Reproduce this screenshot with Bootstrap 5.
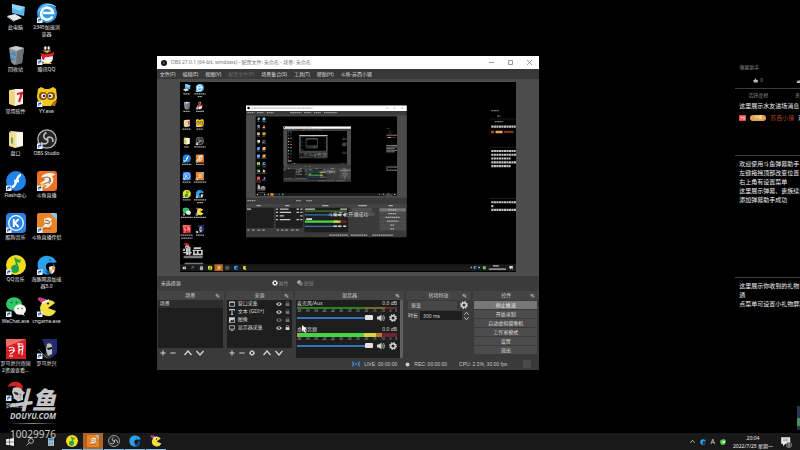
<!DOCTYPE html>
<html lang="zh-CN">
<head>
<meta charset="utf-8">
<meta name="viewport" content="width=device-width, initial-scale=1">
<title>OBS Studio</title>
<link href="https://cdn.jsdelivr.net/npm/bootstrap@5.3.0/dist/css/bootstrap.min.css" rel="stylesheet">
<style>
:root{--ink:#d6d6d6;--panel:#3a3a3a;--dark:#1e1e1e}
body{background:#000;color:var(--ink);font:5px/7px "Noto Sans","Noto Sans CJK SC",sans-serif;height:100vh;overflow:hidden}
button,input,select{font:inherit;color:inherit;background:none;border:0;padding:0;margin:0;min-width:0}
svg{display:block;flex:none}
.sprite{position:absolute;width:0;height:0}
.icons{display:grid;grid-template-columns:31px 31px;grid-auto-rows:42px;padding-top:3px}
.shortcut{display:flex;flex-direction:column;align-items:center;justify-content:flex-start;gap:1px;white-space:nowrap;color:#e6e6e6}
.shortcut svg{width:20px;height:20px}
.i5{width:5px;height:5px}.i6{width:6px;height:6px}.i8{width:8px;height:8px}.i12{width:12px;height:12px}
/* watermark over the desktop */
.brand{position:absolute;left:8px;bottom:10px;width:50px;color:#c9c9c9;text-align:center;pointer-events:none}
.brand-name{font:italic 900 24px/24px "Noto Sans CJK SC",sans-serif;color:#c4c4c4;white-space:nowrap;margin-left:-2px}
.brand-site{font:italic 700 8px/9px "Noto Sans","Liberation Sans",sans-serif;white-space:nowrap}
.brand-rule{height:1px;background:linear-gradient(90deg,transparent,#888,transparent);margin:3px 0 4px}
.brand-id{font:10px/12px "Noto Sans",sans-serif}
/* recorder window */
.win{position:absolute;left:19.6%;top:13%;width:47.8%;background:var(--panel)}
.win-title{background:#fff;color:#777;height:13px}
.win-title button{width:19px;height:13px;display:grid;place-items:center}
.win-menu{height:10px;background:#383838;gap:7px;padding-left:3px}
.win-menu a{color:#dedede;text-decoration:none}
.win-menu a.off{color:#696969}
.stage{background:#4c4c4c;padding:3px 6% 4px}
.stage svg{width:100%;height:auto;background:#000}
.source-bar{height:15px;background:#3b3b3b}
.source-bar button{display:flex;align-items:center;gap:1px;color:#858585}
.source-name{width:30%}
.docks{display:grid;grid-template-columns:minmax(0,67fr) minmax(0,67fr) minmax(0,109fr) minmax(0,65fr) minmax(0,66fr);column-gap:2px}
.dock-head{height:9px;background:#444;display:flex;align-items:center;justify-content:center;position:relative;color:#cfcfcf}
.dock-head svg{position:absolute;right:4px}
.dock-list{background:var(--dark);height:48px;margin:0 1px;list-style:none;padding:0}
.dock-list li{height:8px;display:flex;align-items:center;gap:3px;padding:0 2px;white-space:nowrap}
.dock-list li.on{background:#2c2c2c}
.dock-tools{height:11px;display:flex;align-items:center;gap:4px;padding-left:3px}
.mixer{background:var(--dark);height:58px;margin:0 1px;border-right:3px solid #606060;padding:0 3px 0 1px}
.channel{height:26px}
.meter{height:2px;background:linear-gradient(90deg,#2f7f22 0 68%,#6f6d25 68% 88%,#6f2a2a 88%)}
.meter.loud{height:4px;background:linear-gradient(90deg,#c8993a 0 2%,#46d446 2% 67%,#d8d440 67% 79%,#c07a2c 79% 85%,#702432 85%)}
.scale{display:flex;justify-content:space-between;font-size:3px;line-height:4px;color:#b5b5b5;height:5px}
.vol{appearance:none;flex:1;height:5px;background:linear-gradient(#3673ba,#3673ba) center/100% 2px no-repeat}
.vol::-webkit-slider-thumb{appearance:none;width:8px;height:5px;background:#e2e2e2;border:0;border-radius:1px}
.field{background:var(--dark);height:9px;width:100%;padding-left:3px}
select.field{background:#474747;appearance:none}
.line1{height:11px;padding:0 3px 0 2px;gap:3px}
.line2{gap:2px;padding:0 2px}
.ctl{background:#4c4c4c;height:8px;line-height:8px;color:#dcdcdc}
.ctl.active-out{background:#777;color:#f2f2f2}
.controls{gap:1px;padding:1px 2px 0 1px}
.status{height:11px;font-family:"Liberation Sans",sans-serif;color:#c8c8c8;white-space:nowrap}
.pointer{position:absolute;left:37.8%;top:75%;width:5px;height:8px}
/* chat helper, runs off the right edge */
.chat{position:absolute;left:91.9%;right:0;top:14.5%;overflow:hidden;white-space:nowrap;font-size:6px;line-height:9px;color:#f0f0f0}
.chat section{border-top:1px solid #3c3c3c;padding-left:4px}
.chat .dim{color:#8a8a8a;font-size:5px}
.s-head{height:25px;padding-left:4px}
.likes{padding:4px 0 0 14px;gap:2px}
.tabs-row{padding:2px 0 2px 9px}
.entry{gap:4px;padding-top:3px}
.entry>*{flex:none}
.who{color:#a8401f}
.s-enter{height:67px}.s-msg{height:122px;padding-top:4px}.s-gift{padding-top:4px}
.hi{background:#e2483f;color:#fff;font-size:5px;line-height:6px;padding:0 1px}
.tag{background:#dfa451;color:#fff3d0;font-size:4px;line-height:6px;border-radius:3px;width:16px;text-align:center}
.sidebit{position:absolute;right:0;bottom:3px;width:3px;height:24px;background:linear-gradient(#26364f 0 50%,#4c8a60 50% 85%,#26364f 85%)}
/* taskbar */
.taskbar{height:17px;background:#191919}
.task{width:20px;height:17px;display:grid;place-items:center;margin-right:1px}
.task:first-child{margin-right:0}
.task.run{border-bottom:1px solid #76b9ed}
.task.front{background:#b06526}
.tray{gap:5px;padding-right:8px}
.lang{font-size:7px}
.clock{line-height:8px;text-align:center;width:44px;color:#eee}
</style>
<script src="https://cdn.jsdelivr.net/npm/bootstrap@5.3.0/dist/js/bootstrap.bundle.min.js"></script>
</head>
<body class="d-flex flex-column">
<svg class="sprite" aria-hidden="true">
<defs>
<symbol id="lnk" viewBox="0 0 20 20"><rect y="14.500" width="5.500" height="5.500" fill="#eef3fa"/><path d="M1.200 18.800V17q0-1.200 1.200-1.200h.8v-1l1.500 1.600-1.500 1.500v-1h-.8v1.900z" fill="#2458b0"/></symbol>
<symbol id="pc" viewBox="0 0 20 20"><path d="M6 1l13 3-1 9-12-3z" fill="#59b6ec"/><path d="M6 1l13 3-5 4-8-3z" fill="#8fd3f7"/><path d="M1 13l8-2 7 4-8 3z" fill="#e5e9ec"/><path d="M1 13l7 5v1l-7-5z" fill="#aab2b9"/></symbol>
<symbol id="bin" viewBox="0 0 20 20"><path d="M3 3l7-2 8 2-2 15-8 2-3-3z" fill="#8d9194"/><path d="M3 3l7-2 8 2-7 3z" fill="#c7cbce"/><path d="M11 6l7-3-2 15-6 2z" fill="#6e7275"/><path d="M5 9l3-1 1 3m0 3l-3 1-1-3" fill="none" stroke="#2d8de0" stroke-width="1.700"/></symbol>
<symbol id="fold1" viewBox="0 0 20 20"><path d="M4 3l6-1v17l-6-2z" fill="#f6e3a1"/><path d="M9 2h8v15l-8 2z" fill="#f4f0e6"/><path d="M3 3l6 2v14l-6-2z" fill="#f0d581"/><path d="M11 7l5-1-3 9" fill="none" stroke="#d2232b" stroke-width="2.200"/></symbol>
<symbol id="fold2" viewBox="0 0 20 20"><path d="M4 2l12 1 1 14-8 2z" fill="#eae7c3"/><path d="M10 4l7-1v13l-6 2z" fill="#fbf8e4"/><path d="M3 3l6 3v13l-6-2z" fill="#f3dc84"/><path d="M5 8l2 1v6l-2-1z" fill="#6da56c"/></symbol>
<symbol id="flash" viewBox="0 0 20 20"><circle cx="10" cy="10" r="10" fill="#2083ea"/><path d="M15 4c-5 0-4 12-9 12M8 10h5" fill="none" stroke="#fff" stroke-width="2.400"/><use href="#lnk"/></symbol>
<symbol id="kugou" viewBox="0 0 20 20"><rect width="20" height="20" rx="4" fill="#2a83e8"/><circle cx="10" cy="10" r="7.300" fill="none" stroke="#fff" stroke-width="1.300"/><path d="M7.800 6v8M12.700 6l-4 4 4 4" fill="none" stroke="#fff" stroke-width="2"/><use href="#lnk"/></symbol>
<symbol id="qqm0" viewBox="0 0 20 20"><circle cx="10" cy="10" r="10" fill="#f6dc1c"/><path d="M8 2l5 3 2-1-1 4-3-1 2 6a3.600 3.600 0 1 1-3-3.500z" fill="#22a34a"/><circle cx="9" cy="14" r="4" fill="#22a34a"/></symbol>
<symbol id="qqm" viewBox="0 0 20 20"><use href="#qqm0"/><use href="#lnk"/></symbol>
<symbol id="wechat" viewBox="0 0 20 20"><ellipse cx="8" cy="7" rx="8" ry="6.800" fill="#32c566"/><ellipse cx="14" cy="12.500" rx="6" ry="5.200" fill="#f1f3f1"/><path d="M17 16l2 3-4-2z" fill="#f1f3f1"/><g fill="#24623b"><circle cx="5.500" cy="5.500" r="1"/><circle cx="10.500" cy="5.500" r="1"/><circle cx="12" cy="11.500" r=".7"/><circle cx="16" cy="11.500" r=".7"/></g><use href="#lnk"/></symbol>
<symbol id="rome" viewBox="0 0 20 20"><rect width="20" height="20" fill="#d51f24"/><path d="M0 0h20L0 8z" fill="#ef6a63"/><path d="M3 9q4-2 5 1t-4 5M3 12q3-2 6 0M11 5h6M12 8l5-1-1 9M12 12l4-2M13 4v11M3 17h4" fill="none" stroke="#fff" stroke-width="1.100"/></symbol>
<symbol id="spart" viewBox="0 0 20 20"><path d="M2 5c3-6 14-6 15 2l-2 2C12 5 7 4 2 6z" fill="#d32222"/><path d="M7 7c4-2 9 0 10 4v8l-4 1-5-3-2-6z" fill="#c9c5c4"/><path d="M8 11l4 1v2l-3-1zM14 12l3 0-1 2h-2zM11 16l4 1" fill="#2b2b2b" stroke="#2b2b2b" stroke-width=".6"/><use href="#lnk"/></symbol>
<symbol id="ie" viewBox="0 0 20 20"><circle cx="10" cy="10" r="10" fill="#2d9be8"/><path d="M15.300 13.500A6 6 0 1 1 16 10H6" fill="none" stroke="#fff" stroke-width="2.600"/><path d="M1 9C4 2 14-1 19 4" fill="none" stroke="#a8dcfa" stroke-width="1"/><use href="#lnk"/></symbol>
<symbol id="qq" viewBox="0 0 20 20"><ellipse cx="10" cy="13" rx="6" ry="5.500" fill="#f4f4f4"/><path d="M5 12q0-4 2-5h6q3 1 2 5l-1-2H6z" fill="#222"/><ellipse cx="10" cy="5" rx="4" ry="4" fill="#24201c"/><ellipse cx="8.300" cy="3" rx="1.100" ry="1.700" fill="#fff"/><ellipse cx="11.700" cy="3" rx="1.100" ry="1.700" fill="#fff"/><path d="M6 5.500h8L10 8z" fill="#e9b13a"/><path d="M3 8q7 3 14-1v3q-6 3-9 2l-1 3-2-1v-3z" fill="#df1d28"/><path d="M6 18h8l1 1H5z" fill="#e9b13a"/><use href="#lnk"/></symbol>
<symbol id="yy" viewBox="0 0 20 20"><path d="M1 2l3-2 4 2h4l4-2 3 2 1 8q0 4-3 5l-3 4H6l-3-4Q0 14 0 9z" fill="#f2c81c"/><circle cx="6" cy="9" r="4" fill="#7e4b1d"/><circle cx="14" cy="9" r="4" fill="#7e4b1d"/><circle cx="6.500" cy="9" r="2.400" fill="#f7e7ca"/><circle cx="13.500" cy="9" r="2.400" fill="#f7e7ca"/><circle cx="7" cy="9" r="1.100"/><circle cx="13" cy="9" r="1.100"/><path d="M16 15l4-1-2 5-3 0z" fill="#a4731d"/><use href="#lnk"/></symbol>
<symbol id="obs" viewBox="0 0 20 20"><circle cx="10" cy="10" r="9.200" fill="#252525" stroke="#b9b9b9" stroke-width="1.300"/><path d="M9.500 3.500q-4 2-2 6 2 2 4 1M3.800 13.800q5 2.500 7-1 .6-2.600-1-4M16 13q.3-5-4-5-2.500.8-2 3.300" fill="none" stroke="#bdbdbd" stroke-width="1.600"/></symbol>
<symbol id="obsl" viewBox="0 0 20 20"><use href="#obs"/><use href="#lnk"/></symbol>
<symbol id="fish" viewBox="0 0 20 20"><rect width="20" height="20" rx="3" fill="#ee7021"/><path d="M4 6q3-4 9-4 5 0 5 2l-3 1q2 3 1 6l-4 5-5 2 3-4-5 1-2-3 5-3q-1-3-4-3z" fill="#f8f0e5"/><path d="M6 7q4-2 7 0l-1 4-5 2M13 7q2 3-1 6" fill="none" stroke="#72482d" stroke-width=".8"/><circle cx="6" cy="14" r="2" fill="#eebf33"/><use href="#lnk"/></symbol>
<symbol id="fish20" viewBox="0 0 20 20"><rect width="20" height="20" rx="2" fill="#e88425"/><path d="M13 0h5q2 0 2 2v5z" fill="#8ac9ee"/><path d="M7 6q4-3 8 0l-1 2 1 3-4 4-2-1-4 1 3-4-1-3z" fill="#f7ecdc"/><path d="M8 10l4 1 1-3M5 16q5-2 9 0M8 7l4 1" fill="none" stroke="#7b4d2a" stroke-width=".9"/></symbol>
<symbol id="fish2" viewBox="0 0 20 20"><use href="#fish20"/><use href="#lnk"/></symbol>
<symbol id="dol0" viewBox="0 0 20 20"><path d="M1 13C-1 5 5 0 11 1c5 0 7 4 9 6l-4 1c-6-2-9 3-6 7 2 3 6 2 8 1-5 6-15 4-17-3z" fill="#2aa0ea"/><path d="M17 9q4 5-2 10-5 1-7-3 6 2 8-7z" fill="#174a9c"/><circle cx="13" cy="5" r=".8" fill="#123a66"/></symbol>
<symbol id="dol" viewBox="0 0 20 20"><use href="#dol0"/><path d="M12 12l3-1 3 1q0 5-3 7-3-2-3-7z" fill="#f4f4f4"/><path d="M15 11l3 1v3h-3zM12 15h3v4q-2-1-3-4z" fill="#f0a92a"/><use href="#lnk"/></symbol>
<symbol id="pac0" viewBox="0 0 20 20"><path d="M1 3q-1-4 4-2l4 1 2 2-5 3z" fill="#c2417e"/><path d="M18 6l-7 5 8 3q-3 6-9 5-7-1-7-8 1-7 8-8 5 0 7 3z" fill="#f4df42"/><path d="M5 6l7-3" stroke="#fff" stroke-width="1.500"/><circle cx="11" cy="6.500" r="1"/></symbol>
<symbol id="pac" viewBox="0 0 20 20"><use href="#pac0"/><use href="#lnk"/></symbol>
<symbol id="knight" viewBox="0 0 20 20"><path d="M5 0h15v14l-7 6z" fill="#202a7a"/><path d="M8 4q5-4 8 2v9l-5 5-5-2 3-5z" fill="#32363e"/><path d="M10 5q4-2 5 2v8l-4 2-2-6z" fill="#b8bec4"/><path d="M10 9l5-1v2l-4 1z" fill="#16181c"/><path d="M1 10l9 9" stroke="#60656c"/><use href="#lnk"/></symbol>
<symbol id="gear" viewBox="0 0 16 16"><circle cx="8" cy="8" r="4.600" fill="none" stroke="currentColor" stroke-width="3"/><circle cx="8" cy="8" r="6.700" fill="none" stroke="currentColor" stroke-width="2.400" stroke-dasharray="2.800 2.460"/></symbol>
<symbol id="plus" viewBox="0 0 16 16"><path d="M8 1v14M1 8h14" stroke="currentColor" stroke-width="2.600"/></symbol>
<symbol id="minus" viewBox="0 0 16 16"><path d="M1 8h14" stroke="currentColor" stroke-width="2.600"/></symbol>
<symbol id="up" viewBox="0 0 16 16"><path d="M1 12l7-8 7 8" fill="none" stroke="currentColor" stroke-width="2.600"/></symbol>
<symbol id="down" viewBox="0 0 16 16"><path d="M1 4l7 8 7-8" fill="none" stroke="currentColor" stroke-width="2.600"/></symbol>
<symbol id="pop" viewBox="0 0 16 16"><path d="M2 3h8v8H2zM7 7h7v7H7z" fill="#aaa" stroke="#555"/></symbol>
<symbol id="eye" viewBox="0 0 16 16"><path d="M0 8q8-10 16 0-8 10-16 0z" fill="currentColor"/><circle cx="8" cy="8" r="3.400" fill="#1e1e1e"/><circle cx="8" cy="8" r="1.600" fill="currentColor"/></symbol>
<symbol id="lock" viewBox="0 0 16 16"><path d="M2 7h12v9H2z" fill="currentColor"/><path d="M4.500 8V4.500a3.500 3.500 0 0 1 7 0V8" fill="none" stroke="currentColor" stroke-width="2"/></symbol>
<symbol id="spk" viewBox="0 0 16 16"><path d="M0 5h4l5-4v14l-5-4H0z" fill="currentColor"/><path d="M11 5q2 3 0 6M13 2q4 6 0 12" fill="none" stroke="currentColor" stroke-width="1.500"/></symbol>
<symbol id="winicon" viewBox="0 0 16 16"><path d="M1 2h14v12H1zM1 4h14" fill="none" stroke="currentColor" stroke-width="2"/></symbol>
<symbol id="ticon" viewBox="0 0 16 16"><path d="M1 5V1.500h14V5M8 2v13M5 15h6" fill="none" stroke="currentColor" stroke-width="2.600"/></symbol>
<symbol id="img" viewBox="0 0 16 16"><path d="M0 1h16v14H0z" fill="currentColor"/><path d="M2 13l5-6 3 3 4-6v9z" fill="#1e1e1e"/></symbol>
<symbol id="mon" viewBox="0 0 16 16"><path d="M1 2h14v9H1zM4 14.500h8" fill="none" stroke="currentColor" stroke-width="2"/></symbol>
<symbol id="flt" viewBox="0 0 16 16"><circle cx="6" cy="6" r="5.500" fill="#aaa"/><circle cx="10.500" cy="10.500" r="5" fill="#777"/></symbol>
<symbol id="start" viewBox="0 0 16 16"><path d="M0 2.500l7-1V7.500H0zM8 1.400L16 0v7.500H8zM0 8.500h7v6l-7-1zM8 8.500h8V16l-8-1.300z" fill="#eee"/></symbol>
<symbol id="search" viewBox="0 0 16 16"><circle cx="10" cy="6" r="4.800" fill="none" stroke="#ddd" stroke-width="1.500"/><path d="M6.500 9.500L1 15" stroke="#ddd" stroke-width="1.500"/></symbol>
<symbol id="calc" viewBox="0 0 16 16"><path d="M2 0h12v16H2z" fill="#b5cbd9"/><path d="M3 1h10v4H3z" fill="#3c82b2"/><path d="M3 8h10M3 11h10M3 14h10" stroke="#5a7688" stroke-dasharray="2 1.500" stroke-width="1.700"/></symbol>
<symbol id="note" viewBox="0 0 20 20"><path d="M2 2h15v11H9l-4 4v-4H2z" fill="#eee"/><path d="M5 5h9M5 8h9" stroke="#666"/><circle cx="15" cy="15" r="4.500" fill="#444" stroke="#999"/><path d="M15 12v6" stroke="#fff"/></symbol>

<!-- the captured screen, drawn once and repeated inside itself -->
<symbol id="screen" viewBox="0 0 800 450">
<rect width="800" height="450"/>
<g>
<use href="#pc" x="6" y="4" width="20" height="20"/><use href="#ie" x="37" y="4" width="20" height="20"/>
<use href="#bin" x="6" y="46" width="20" height="20"/><use href="#qq" x="37" y="46" width="20" height="20"/>
<use href="#fold1" x="6" y="88" width="20" height="20"/><use href="#yy" x="37" y="88" width="20" height="20"/>
<use href="#fold2" x="6" y="130" width="20" height="20"/><use href="#obsl" x="37" y="130" width="20" height="20"/>
<use href="#flash" x="6" y="172" width="20" height="20"/><use href="#fish" x="37" y="172" width="20" height="20"/>
<use href="#kugou" x="6" y="214" width="20" height="20"/><use href="#fish2" x="37" y="214" width="20" height="20"/>
<use href="#qqm" x="6" y="256" width="20" height="20"/><use href="#dol" x="37" y="256" width="20" height="20"/>
<use href="#wechat" x="6" y="298" width="20" height="20"/><use href="#pac" x="37" y="298" width="20" height="20"/>
<use href="#rome" x="6" y="340" width="20" height="20"/><use href="#knight" x="37" y="340" width="20" height="20"/>
<use href="#spart" x="6" y="382" width="20" height="20"/>
</g>
<g fill="none" stroke="#a4a4a4" stroke-width="3" stroke-dasharray="4 1">
<path d="M8 28h16M34 28h27M42 35h11M8 70h16M38 70h19M6 112h20M39 112h16M10 154h11M34 154h27M5 196h22M38 196h20M6 238h20M33 238h29M7 280h18M33 280h29M41 287h14M2 322h28M33 322h29M1 364h30M38 364h20M3 371h27"/></g>
<g fill="#c9c9c9"><path d="M14 395h5v16h-5zM20 392h5v20h-5zM8 404h20v3H8zM33 393h18l-2 4H32zM30 399h24v3H30zM31 408h23v4H30zM31 399h4v9h-4zM40 399h4v9h-4zM50 399h4v9h-4z"/><path d="M9 413h45v6H8zM11 430h44v7H11z" opacity=".6"/></g>
<path d="M735 88h65M735 155h65M735 277h65" stroke="#444"/>
<g fill="none" stroke="#c4c4c4" stroke-width="5" stroke-dasharray="5 1"><path d="M740 106h58M740 164h58M740 173h60M740 182h46M740 191h60M740 200h46M740 286h60M740 295h5M740 304h60"/><path d="M740 68h19M754 81h8M748 94h20" stroke="#777" stroke-width="3"/></g>
<path d="M740 116h6v6h-6z" fill="#e2483f"/><path d="M750 116h17v6h-17z" fill="#dfa451"/><path d="M770 116h23v5h-23z" fill="#82331f"/>
<path d="M0 433h800v17H0z" fill="#191919"/><path d="M82 433h20v17H82z" fill="#b06526"/>
<use href="#start" x="6" y="438" width="8" height="8"/><use href="#search" x="26" y="437" width="8" height="8"/><use href="#calc" x="46" y="437" width="10" height="10"/><use href="#qqm0" x="66" y="436" width="11" height="11"/><use href="#fish20" x="87" y="436" width="11" height="11"/><use href="#obs" x="107" y="436" width="11" height="11"/><use href="#dol0" x="128" y="436" width="11" height="11"/><use href="#pac0" x="148" y="436" width="11" height="11"/>
<path d="M691 441h3M709 441h4M744 437h14M734 445h41" stroke="#bbb" stroke-width="3"/><use href="#dol0" x="697" y="437" width="9" height="9"/><path d="M720 438h7v7h-7z" fill="#5ecb5a"/><use href="#note" x="782" y="436" width="11" height="11"/>
<path d="M157 56h382v313H157z" fill="#3a3a3a"/><path d="M157 56h382v13H157z" fill="#fff"/><path d="M157 79h382v196H157z" fill="#4c4c4c"/>
<circle cx="163" cy="62" r="3"/><path d="M170 62h145M491 62h4M508 62h4M527 62h4" stroke="#bbb" stroke-width="3" stroke-dasharray="5 1"/>
<path d="M160 73h17M183 73h16M206 73h17M262 73h27M295 73h17M318 73h17M342 73h32M160 282h19M276 282h12M300 282h14" stroke="#999" stroke-width="3" stroke-dasharray="4 1"/>
<path d="M157 290h382v9H157z" fill="#444"/><path d="M182 294h10M250 294h10M338 294h15M424 294h20M496 294h10" stroke="#aaa" stroke-width="3"/>
<path d="M158 299h65v48h-65zM227 299h65v48h-65zM296 299h104v58H296z" fill="#1e1e1e"/>
<path d="M159 302h10M228 302h5M237 302h21M228 310h5M237 310h27M228 318h5M237 318h10M228 327h5M237 327h25M277 302h6M286 302h5M277 310h6M286 310h5M286 318h5M277 327h6M286 327h5M297 302h24M381 302h16" stroke="#cacaca" stroke-width="3"/>
<path d="M160 352h5M171 352h6M184 352h7M195 352h7M230 352h5M240 352h6M250 352h7M264 352h7M275 352h7" stroke="#999" stroke-width="3"/>
<path d="M297 307h99" stroke="#447d2c" stroke-width="3"/><path d="M297 332h78" stroke="#4cd64c" stroke-width="5"/><path d="M365 332h17" stroke="#d8d440" stroke-width="5"/><path d="M383 332h13" stroke="#702432" stroke-width="5"/><path d="M297 316h69M297 343h69" stroke="#3673ba" stroke-width="3"/><path d="M365 316h8M375 316h9M388 316h7M365 343h8M375 343h9M388 343h7M300 326h14" stroke="#ddd" stroke-width="4"/>
<path d="M408 304h48M420 314h43" stroke="#505050" stroke-width="9"/><path d="M474 304h63" stroke="#777" stroke-width="8"/><path d="M474 313h63M474 322h63M474 331h63M474 340h63M474 349h63" stroke="#4c4c4c" stroke-width="8"/><path d="M495 304h20M495 313h20M488 322h34M492 331h27M500 340h10M500 349h10M355 364h45M406 364h40M457 364h50" stroke="#aaa" stroke-width="3" stroke-dasharray="4 1"/>
<path d="M180 82h336v189H180z"/>
<text x="352" y="319" font-size="12" fill="#d0d0d0" font-family="Noto Sans CJK SC, sans-serif">斗鱼平台开播成功</text>
</symbol>
</defs>
</svg>

<main class="flex-grow-1 position-relative">
<div class="icons">
<button class="shortcut"><svg><use href="#pc"/></svg>此电脑</button>
<button class="shortcut"><svg><use href="#ie"/></svg><span>2345加速浏<br>览器</span></button>
<button class="shortcut"><svg><use href="#bin"/></svg>回收站</button>
<button class="shortcut"><svg><use href="#qq"/></svg>腾讯QQ</button>
<button class="shortcut"><svg><use href="#fold1"/></svg>常用软件</button>
<button class="shortcut"><svg><use href="#yy"/></svg>YY.exe</button>
<button class="shortcut"><svg><use href="#fold2"/></svg>盘口</button>
<button class="shortcut"><svg><use href="#obsl"/></svg>OBS Studio</button>
<button class="shortcut"><svg><use href="#flash"/></svg>Flash中心</button>
<button class="shortcut"><svg><use href="#fish"/></svg>斗鱼直播</button>
<button class="shortcut"><svg><use href="#kugou"/></svg>酷狗音乐</button>
<button class="shortcut"><svg><use href="#fish2"/></svg>斗鱼直播伴侣</button>
<button class="shortcut"><svg><use href="#qqm"/></svg>QQ音乐</button>
<button class="shortcut"><svg><use href="#dol"/></svg><span>海豚网游加速<br>器5.0</span></button>
<button class="shortcut"><svg><use href="#wechat"/></svg>WeChat.exe</button>
<button class="shortcut"><svg><use href="#pac"/></svg>cngame.exe</button>
<button class="shortcut"><svg><use href="#rome"/></svg><span>罗马复兴帝国<br>2资源查看...</span></button>
<button class="shortcut"><svg><use href="#knight"/></svg>罗马复兴</button>
<button class="shortcut"><svg><use href="#spart"/></svg>罗马复兴</button>
</div>

<section class="win" aria-label="OBS">
<header class="win-title d-flex align-items-center">
<svg class="i6 ms-1" viewBox="0 0 20 20"><circle cx="10" cy="10" r="10" fill="#111"/><path d="M9 4q-3 3 0 6 3 1 5-1M5 13q4 2 5-3" fill="none" stroke="#888" stroke-width="2"/></svg>
<span class="flex-grow-1 text-nowrap ps-1">OBS 27.0.1 (64-bit, windows) - 配置文件: 未命名 - 场景: 未命名</span>
<button aria-label="最小化"><svg class="i5" viewBox="0 0 5 5"><path d="M0 2.500h5" stroke="#999"/></svg></button>
<button aria-label="最大化"><svg class="i5" viewBox="0 0 5 5"><path d="M.5.5h4v4h-4z" fill="none" stroke="#999"/></svg></button>
<button aria-label="关闭"><svg class="i5" viewBox="0 0 5 5"><path d="M0 0l5 5M5 0L0 5" stroke="#888" stroke-width=".8"/></svg></button>
</header>
<nav class="win-menu d-flex align-items-center text-nowrap">
<a href="#">文件(F)</a><a href="#">编辑(E)</a><a href="#">视图(V)</a><a href="#" class="off">配置文件(P)</a><a href="#">场景集合(S)</a><a href="#">工具(T)</a><a href="#">帮助(H)</a><a href="#">斗鱼-苏西小猪</a>
</nav>
<div class="stage">
<svg viewBox="0 0 800 450" role="img" aria-label="预览">
<use href="#screen" width="800" height="450"/>
<g transform="translate(180 82) scale(.42)"><use href="#screen" width="800" height="450"/>
<g transform="translate(180 82) scale(.42)"><use href="#screen" width="800" height="450"/>
<g transform="translate(180 82) scale(.42)"><use href="#screen" width="800" height="450"/></g></g></g>
</svg>
</div>
<div class="source-bar d-flex align-items-center">
<span class="ps-1 source-name">未选择源</span>
<button class="me-2"><svg class="i6 text-light"><use href="#gear"/></svg>属性</button>
<button><svg class="i6"><use href="#flt"/></svg>滤镜</button>
</div>
<div class="docks">
<section><div class="dock-head">场景<svg class="i5"><use href="#pop"/></svg></div>
<ul class="dock-list"><li class="on">场景</li></ul>
<div class="dock-tools"><button aria-label="添加"><svg class="i6"><use href="#plus"/></svg></button><button aria-label="移除"><svg class="i6"><use href="#minus"/></svg></button><button class="ps-1" aria-label="上移"><svg class="i8"><use href="#up"/></svg></button><button aria-label="下移"><svg class="i8"><use href="#down"/></svg></button></div></section>
<section><div class="dock-head">来源<svg class="i5"><use href="#pop"/></svg></div>
<ul class="dock-list">
<li><svg class="i6"><use href="#winicon"/></svg><span class="flex-grow-1">窗口采集</span><svg class="i6"><use href="#eye"/></svg><svg class="i5 text-secondary"><use href="#lock"/></svg></li>
<li><svg class="i6"><use href="#ticon"/></svg><span class="flex-grow-1">文本 (GDI+)</span><svg class="i6"><use href="#eye"/></svg><svg class="i5 text-secondary"><use href="#lock"/></svg></li>
<li><svg class="i6"><use href="#img"/></svg><span class="flex-grow-1">图像</span><svg class="i6 text-secondary"><use href="#eye"/></svg><svg class="i5 text-secondary"><use href="#lock"/></svg></li>
<li><svg class="i6"><use href="#mon"/></svg><span class="flex-grow-1">显示器采集</span><svg class="i6"><use href="#eye"/></svg><svg class="i5"><use href="#lock"/></svg></li>
</ul>
<div class="dock-tools"><button aria-label="添加"><svg class="i6"><use href="#plus"/></svg></button><button aria-label="移除"><svg class="i6"><use href="#minus"/></svg></button><button aria-label="设置"><svg class="i6"><use href="#gear"/></svg></button><button class="ps-1" aria-label="上移"><svg class="i8"><use href="#up"/></svg></button><button aria-label="下移"><svg class="i8"><use href="#down"/></svg></button></div></section>
<section><div class="dock-head">混音器<svg class="i5"><use href="#pop"/></svg></div>
<div class="mixer">
<div class="channel"><div class="d-flex justify-content-between"><label for="v1">麦克风/Aux</label><span>0.0 dB</span></div><div class="meter"></div>
<div class="scale"><span>-60</span><span>-55</span><span>-50</span><span>-45</span><span>-40</span><span>-35</span><span>-30</span><span>-25</span><span>-20</span><span>-15</span><span>-10</span><span>-5</span><span>0</span></div>
<div class="d-flex align-items-center gap-1"><input id="v1" class="vol" type="range" value="100"><svg class="i8"><use href="#spk"/></svg><svg class="i8"><use href="#gear"/></svg></div></div>
<div class="channel"><div class="d-flex justify-content-between"><label for="v2">桌面音频</label><span>0.0 dB</span></div><div class="meter loud"></div>
<div class="scale"><span>-60</span><span>-55</span><span>-50</span><span>-45</span><span>-40</span><span>-35</span><span>-30</span><span>-25</span><span>-20</span><span>-15</span><span>-10</span><span>-5</span><span>0</span></div>
<div class="d-flex align-items-center gap-1"><input id="v2" class="vol" type="range" value="100"><svg class="i8"><use href="#spk"/></svg><svg class="i8"><use href="#gear"/></svg></div></div>
</div></section>
<section><div class="dock-head">转场特效<svg class="i5"><use href="#pop"/></svg></div>
<div class="line1 d-flex align-items-center"><select class="field" aria-label="转场"><option>渐变</option></select><svg class="i8"><use href="#gear"/></svg></div>
<div class="line2 d-flex align-items-center"><label for="dur" class="text-nowrap">时长</label><input id="dur" class="field" value="300 ms"><span><svg class="i5"><use href="#up"/></svg><svg class="i5"><use href="#down"/></svg></span></div></section>
<section><div class="dock-head">控件<svg class="i5"><use href="#pop"/></svg></div>
<div class="controls d-grid"><button class="ctl active-out">停止推流</button><button class="ctl">开始录制</button><button class="ctl">启动虚拟摄像机</button><button class="ctl">工作室模式</button><button class="ctl">设置</button><button class="ctl">退出</button></div></section>
</div>
<footer class="status d-flex align-items-center justify-content-end">
<svg class="i8 me-1" viewBox="0 0 16 16"><g fill="none" stroke="#3d8fe0" stroke-width="1.800"><circle cx="8" cy="8" r="1.500"/><path d="M4 4q-3 4 0 8M12 4q3 4 0 8M1 3q-2 5 0 10M15 3q2 5 0 10"/></g></svg><span class="me-2">LIVE: 00:00:00</span>
<svg class="i5 me-1" viewBox="0 0 5 5"><circle cx="2.500" cy="2.500" r="2" fill="#ccc"/></svg><span class="me-2">REC: 00:00:00</span><span class="me-2 ms-1">CPU: 2.3%, 30.00 fps</span>
<svg class="i8 mx-2" viewBox="0 0 8 8"><path d="M0 0h8v8H0z" fill="#4a4a4a"/></svg>
</footer>
</section>
<svg class="pointer" viewBox="0 0 10 16"><path d="M0 0v13l3-3 3 6 2-1-3-6h5z" fill="#fff"/></svg>

<aside class="chat">
<div class="s-head dim">弹幕助手<div class="likes d-flex align-items-center"><svg class="i5" viewBox="0 0 10 10"><path d="M5 0l2 4h3l-1 5H2L0 5l3-1z" fill="#bbb"/></svg><span class="flex-grow-1">0</span><svg class="i5" viewBox="0 0 10 10"><path d="M5 5h5v5H3z" fill="#bbb"/></svg></div></div>
<section class="s-enter"><div class="tabs-row dim d-flex justify-content-between"><span>活跃度榜</span><span>贵</span></div>
这里展示水友进场消息
<div class="entry d-flex align-items-center"><span class="hi">Hi</span><span class="tag">小猪</span><span class="who">苏西小猪</span><span>欢迎</span></div></section>
<section class="s-msg">欢迎使用斗鱼弹幕助手<br>左键拖拽顶部改变位置，<br>右上角有设置菜单<br>这里展示弹幕、贵族续费<br>添加弹幕助手成功</section>
<section class="s-gift">这里展示你收到的礼物，<br>通<br>点菜单可设置小礼物屏蔽</section>
</aside>
<div class="sidebit"></div>
</main>

<footer class="taskbar d-flex align-items-center">
<button class="task" aria-label="开始"><svg class="i8"><use href="#start"/></svg></button>
<button class="task" aria-label="搜索"><svg class="i8"><use href="#search"/></svg></button>
<button class="task" aria-label="计算器"><svg class="i8"><use href="#calc"/></svg></button>
<button class="task run" aria-label="QQ音乐"><svg class="i12"><use href="#qqm0"/></svg></button>
<button class="task run front" aria-label="斗鱼直播伴侣"><svg class="i12"><use href="#fish20"/></svg></button>
<button class="task run" aria-label="OBS"><svg class="i12"><use href="#obs"/></svg></button>
<button class="task run" aria-label="加速器"><svg class="i12"><use href="#dol0"/></svg></button>
<button class="task run" aria-label="游戏"><svg class="i12"><use href="#pac0"/></svg></button>
<div class="tray ms-auto d-flex align-items-center">
<svg class="i5"><use href="#up"/></svg><svg class="i6"><use href="#dol0"/></svg><span class="lang">A</span>
<svg class="i6" viewBox="0 0 12 12"><path d="M1 2l7-2 4 3-2 8-7 1-3-5z" fill="#54c651"/><path d="M5 4h5v4H5z" fill="#d6f5cf"/></svg>
<div class="clock text-nowrap">20:04<br>2022/7/25 星期一</div>
<svg class="i12"><use href="#note"/></svg>
</div>
</footer>
<div class="brand"><div class="brand-name">斗鱼</div><div class="brand-site">DOUYU.COM</div><div class="brand-rule"></div><div class="brand-id">10029976</div></div>
</body>
</html>
